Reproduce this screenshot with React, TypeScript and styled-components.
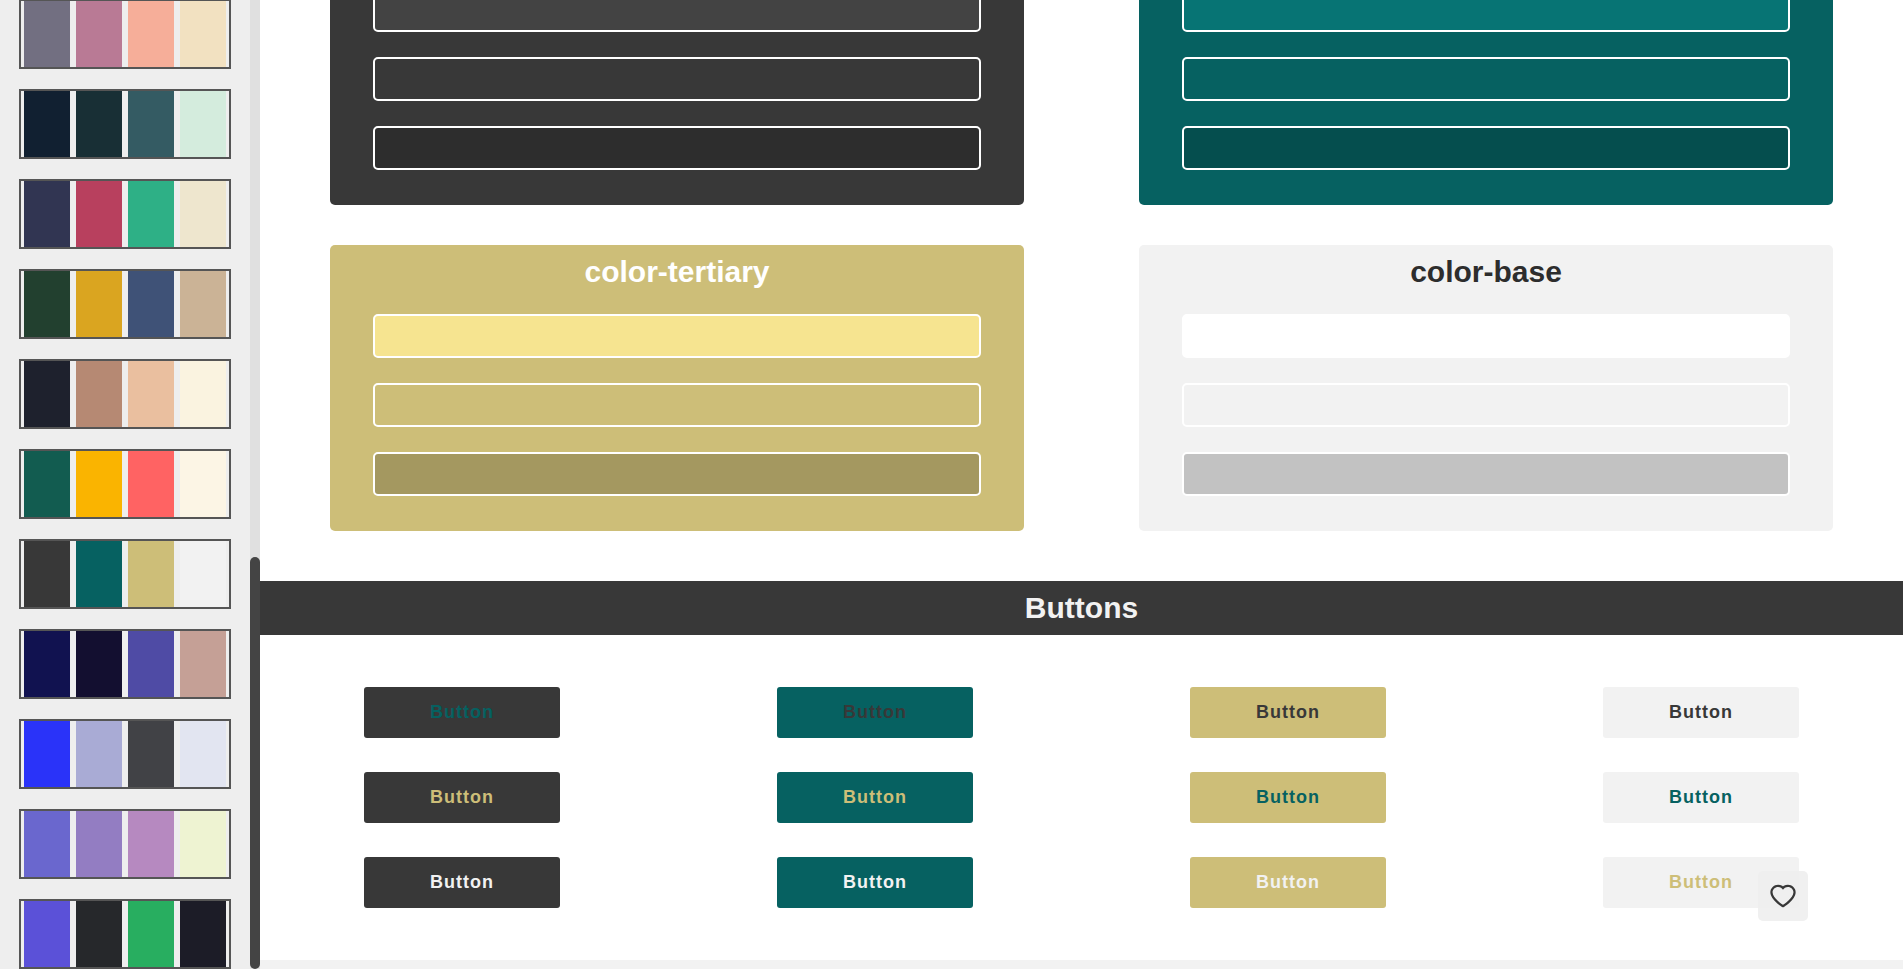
import React from "react";
import styled, { createGlobalStyle } from "styled-components";
import { AiOutlineHeart } from "react-icons/ai";

const dark = "#383838";
const teal = "#066161";
const gold = "#cdbe78";
const base = "#f2f2f2";

const GlobalStyle = createGlobalStyle`
  *, *::before, *::after { box-sizing: border-box; }
  body {
    margin: 0;
    background: #fff;
    font-family: "Liberation Sans", Arial, sans-serif;
  }
`;

const Page = styled.div`
  display: flex;
  height: 100vh;
  overflow: hidden;
`;

const Sidebar = styled.aside`
  display: flex;
  flex: none;
  width: 260px;
  background: #eee;
`;

const PaletteList = styled.div`
  flex: 1;
  display: flex;
  flex-direction: column;
  justify-content: flex-end;
  gap: 20px;
  padding: 0 19px;
  overflow: hidden;
`;

const PaletteButton = styled.button`
  display: flex;
  flex: none;
  justify-content: space-around;
  height: 70px;
  padding: 0;
  border: 2px solid #555;
  background: transparent;
  cursor: pointer;
`;

const Swatch = styled.span<{ $color: string }>`
  width: 46px;
  height: 100%;
  background: ${(p) => p.$color};
`;

const Track = styled.div`
  display: flex;
  flex-direction: column;
  justify-content: flex-end;
  width: 10px;
  background: #e0e0e0;
`;

const Thumb = styled.div`
  height: 42.5%;
  border-radius: 5px;
  background: #444;
`;

const Main = styled.main`
  flex: 1;
  display: flex;
  flex-direction: column;
  justify-content: flex-end;
  min-width: 0;
  overflow: hidden;
`;

const Cards = styled.section`
  flex: none;
  display: grid;
  grid-template-columns: 1fr 1fr;
  gap: 40px 115px;
  padding: 0 70px 50px;
`;

const Card = styled.article<{ $bg: string; $fg: string }>`
  display: flex;
  flex-direction: column;
  align-items: center;
  gap: 25px;
  padding: 10px 0 35px;
  border-radius: 5px;
  background: ${(p) => p.$bg};
  color: ${(p) => p.$fg};
`;

const Title = styled.h2`
  margin: 0;
  font-size: 30px;
  line-height: 34px;
  font-weight: 700;
`;

const Shade = styled.div<{ $color: string }>`
  width: 87.5%;
  height: 44px;
  border: 2px solid #fff;
  border-radius: 5px;
  background: ${(p) => p.$color};
`;

const Banner = styled.header`
  flex: none;
  padding: 10px 0;
  background: ${dark};
  color: ${base};
  text-align: center;
`;

const ButtonGrid = styled.section`
  flex: none;
  display: flex;
  justify-content: space-between;
  padding: 52px 104px;
`;

const ButtonColumn = styled.div`
  display: flex;
  flex-direction: column;
  gap: 34px;
`;

const SampleButton = styled.button<{ $bg: string; $fg: string }>`
  width: 196px;
  height: 51px;
  padding: 0 0 2px;
  border: 0;
  border-radius: 3px;
  background: ${(p) => p.$bg};
  color: ${(p) => p.$fg};
  font: 700 18px/20px "Liberation Sans", Arial, sans-serif;
  letter-spacing: 1px;
  cursor: pointer;
`;

const NextSection = styled.footer`
  flex: none;
  height: 9px;
  background: ${base};
`;

const LikeButton = styled.button`
  position: fixed;
  right: 5%;
  bottom: 5%;
  display: grid;
  place-items: center;
  width: 50px;
  height: 50px;
  padding: 0;
  border: 0;
  border-radius: 5px;
  background: rgba(238, 238, 238, 0.9);
  color: #383838;
  font-size: 30px;
  cursor: pointer;
`;

const palettes = [
  ["#726f81", "#b97a95", "#f6ae99", "#f2e1c1"],
  ["#112031", "#182f35", "#345b63", "#d4ecdd"],
  ["#313552", "#b8405e", "#2eb086", "#eee6ce"],
  ["#22402f", "#daa520", "#3f5277", "#cbb396"],
  ["#1e212d", "#b68973", "#eabf9f", "#faf3e0"],
  ["#125c50", "#fab400", "#ff6363", "#fcf5e5"],
  [dark, teal, gold, base],
  ["#111250", "#130f30", "#4f4ba5", "#c5a096"],
  ["#2a33f9", "#a9abd5", "#414246", "#e2e5f1"],
  ["#6a67ce", "#937dc2", "#b689c0", "#eef3d2"],
  ["#5b51d8", "#26282b", "#28ae60", "#1c1c27"],
];

const cards = [
  { name: "color-primary", bg: dark, fg: "#fff", shades: ["#434343", dark, "#2d2d2d"] },
  { name: "color-secondary", bg: teal, fg: "#fff", shades: ["#077474", teal, "#054e4e"] },
  { name: "color-tertiary", bg: gold, fg: "#fff", shades: ["#f6e490", gold, "#a49860"] },
  { name: "color-base", bg: base, fg: "#2d2d2d", shades: ["#fff", base, "#c2c2c2"] },
];

const buttonColumns = [
  { bg: dark, text: [teal, gold, base] },
  { bg: teal, text: [dark, gold, base] },
  { bg: gold, text: [dark, teal, base] },
  { bg: base, text: [dark, teal, gold] },
];

export default function App() {
  return (
    <>
      <GlobalStyle />
      <Page>
        <Sidebar>
          <PaletteList>
            {palettes.map((colors, i) => (
              <PaletteButton key={i} type="button" aria-label={`Palette ${i + 1}`}>
                {colors.map((c) => (
                  <Swatch key={c} $color={c} />
                ))}
              </PaletteButton>
            ))}
          </PaletteList>
          <Track>
            <Thumb />
          </Track>
        </Sidebar>
        <Main>
          <Cards>
            {cards.map((card) => (
              <Card key={card.name} $bg={card.bg} $fg={card.fg}>
                <Title>{card.name}</Title>
                {card.shades.map((s) => (
                  <Shade key={s} $color={s} />
                ))}
              </Card>
            ))}
          </Cards>
          <Banner>
            <Title>Buttons</Title>
          </Banner>
          <ButtonGrid>
            {buttonColumns.map((col) => (
              <ButtonColumn key={col.bg}>
                {col.text.map((fg) => (
                  <SampleButton key={fg} type="button" $bg={col.bg} $fg={fg}>
                    Button
                  </SampleButton>
                ))}
              </ButtonColumn>
            ))}
          </ButtonGrid>
          <NextSection />
        </Main>
      </Page>
      <LikeButton type="button" aria-label="Like">
        <AiOutlineHeart />
      </LikeButton>
    </>
  );
}
